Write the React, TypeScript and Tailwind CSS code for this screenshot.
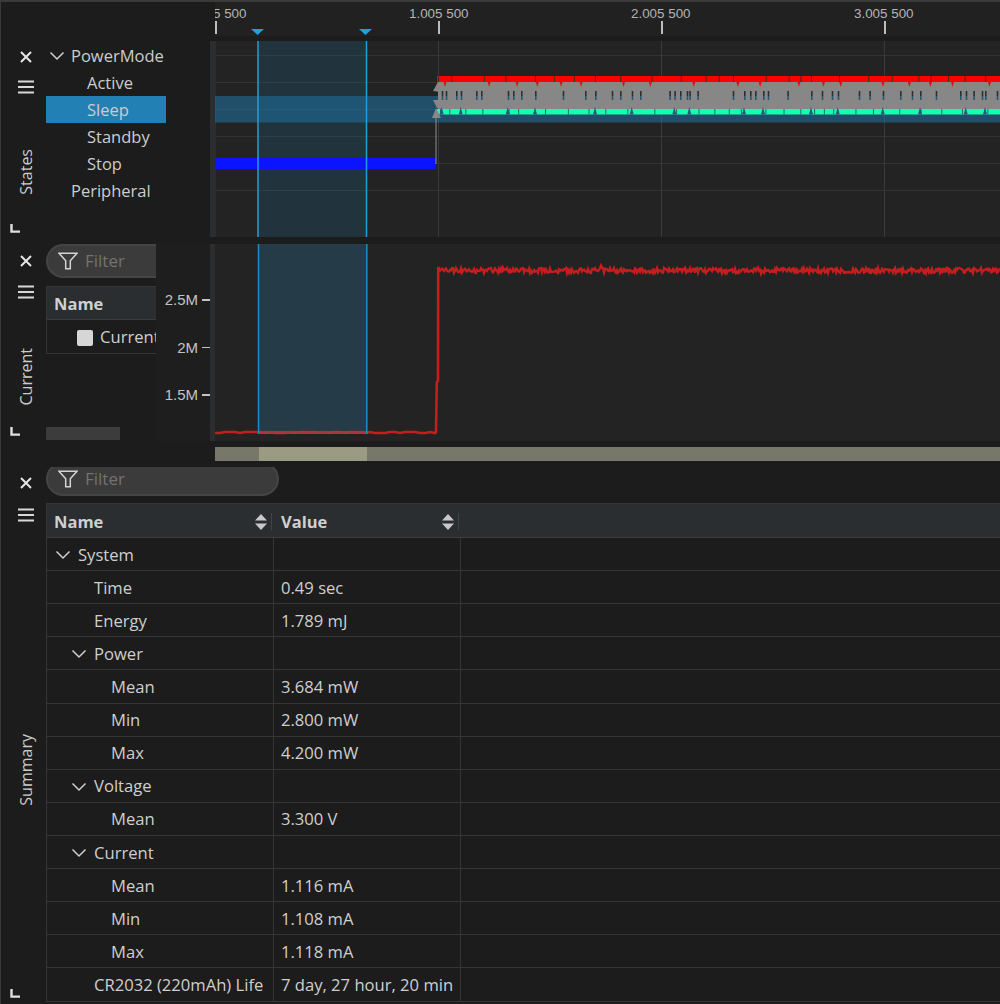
import React from "react";

const UI = { fontFamily: '"Open Sans", "Noto Sans", sans-serif' };
const AX = { fontFamily: '"Liberation Sans", Arial, sans-serif' };

const GAPS = [441.7, 445.7, 456, 460.7, 476, 481, 507.7, 513, 521, 535, 562.7, 585, 595, 611.7, 620, 631.7, 640, 669.3, 674.3, 680, 686.7, 689.3, 697.3, 732.7, 744, 750, 755, 763, 767.7, 787.3, 811, 821.7, 831.7, 837.7, 858.7, 869.3, 882.7, 900, 911.7, 920, 935.7, 960, 965.7, 973.3, 981.7, 985, 996.7];

function rnd(seed: number) {
  let s = seed;
  return () => {
    s = (s * 16807) % 2147483647;
    return (s % 10000) / 10000;
  };
}

function CloseIcon() {
  return (
    <svg width="12" height="12" viewBox="0 0 12 12" className="text-[#e6e6e6]">
      <path d="M1 1 L11 11 M11 1 L1 11" stroke="currentColor" strokeWidth="2" />
    </svg>
  );
}
function MenuIcon() {
  return (
    <svg width="16" height="14" viewBox="0 0 16 14" className="text-[#d8d8d8]">
      <path d="M0 1.5 H16 M0 7 H16 M0 12.5 H16" stroke="currentColor" strokeWidth="2" />
    </svg>
  );
}
function CornerIcon() {
  return (
    <svg width="10" height="9" viewBox="0 0 10 9" className="text-[#e0e0e0]">
      <path d="M1.5 0 V7.6 H10" fill="none" stroke="currentColor" strokeWidth="2.4" />
    </svg>
  );
}
function Chevron() {
  return (
    <svg width="16" height="10" viewBox="0 0 16 10" className="text-[#d0d0d0]">
      <path d="M1.5 1.5 L8 8 L14.5 1.5" fill="none" stroke="currentColor" strokeWidth="1.5" />
    </svg>
  );
}
function FilterIcon() {
  return (
    <svg width="20" height="18" viewBox="0 0 20 18" className="text-[#d4d4d4] shrink-0">
      <path d="M1 1.2 H19 L12.3 8.8 V16.8 H7.7 V8.8 Z" fill="none" stroke="currentColor" strokeWidth="1.5" />
    </svg>
  );
}
function SortIcon() {
  return (
    <svg width="12" height="16" viewBox="0 0 12 16" className="text-[#c8c8c8] shrink-0">
      <path d="M6 0 L12 6.5 H0 Z M0 9.5 H12 L6 16 Z" fill="currentColor" />
    </svg>
  );
}

function Gutter({ label, top, menuGap, labelClass, cornerClass }: { label: string; top: number; menuGap: number; labelClass: string; cornerClass: string }) {
  return (
    <div className="w-[46px] shrink-0 flex flex-col items-center relative pl-[6px]" style={{ paddingTop: top }}>
      <CloseIcon />
      <div style={{ marginTop: menuGap }} className="flex">
        <MenuIcon />
      </div>
      <div className={`[writing-mode:vertical-rl] rotate-180 text-[16px] leading-[20px] text-[#cccccc] ${labelClass}`}>{label}</div>
      <div className={`absolute left-[10px] flex ${cornerClass}`}>
        <CornerIcon />
      </div>
    </div>
  );
}

function FilterPill({ width }: { width: number }) {
  return (
    <div
      className="h-[34px] bg-[#3b3b3b] border-2 border-[#454545] rounded-[17px] flex items-center pl-[10px] gap-[7px] text-[17px] text-[#727272] shrink-0"
      style={{ width }}
    >
      <FilterIcon />
      <span>Filter</span>
    </div>
  );
}

function Row({ indent, name, value, open }: { indent: number; name: string; value?: string; open?: boolean }) {
  return (
    <div className="h-[33.12px] flex border-b border-[#363636] text-[16.6px] text-[#cfcfcf] shrink-0">
      <div className="w-[227px] shrink-0 border-r border-[#363636] flex items-center pt-[2px] whitespace-nowrap" style={{ paddingLeft: indent }}>
        {open && (
          <span className="mr-[7px] flex">
            <Chevron />
          </span>
        )}
        {name}
      </div>
      <div className="w-[187px] shrink-0 border-r border-[#363636] flex items-center pt-[2px] pl-[7px] whitespace-nowrap">{value}</div>
      <div className="flex-1" />
    </div>
  );
}

function AxisBar() {
  const ticks = [
    { x: 0, label: "5 500", left: -2 },
    { x: 223, label: "1.005 500", left: 194 },
    { x: 446, label: "2.005 500", left: 416 },
    { x: 669, label: "3.005 500", left: 639 },
  ];
  return (
    <div className="h-[36px] pl-[215px] shrink-0 border-t-2 border-[#3a3a3a]">
      <div className="relative h-full overflow-hidden bg-[#212121]" style={AX}>
        {ticks.map((t) => (
          <React.Fragment key={t.x}>
            <span className="absolute top-[3px] text-[13.4px] leading-[18px] text-[#b4b4b4] whitespace-nowrap" style={{ left: t.left }}>
              {t.label}
            </span>
            <div className="absolute top-[19px] h-[13px] w-[2px] bg-[#bdbdbd]" style={{ left: t.x }} />
          </React.Fragment>
        ))}
        <svg className="absolute left-[35px] top-[26px]" width="130" height="8" viewBox="0 0 130 8">
          <path d="M1 1 H14 L7.5 7 Z M109 1 H122 L115.5 7 Z" fill="#1f9fdc" />
        </svg>
      </div>
    </div>
  );
}

function StatesChart() {
  const r = rnd(12345);
  const redGaps: number[] = [];
  for (let x = 438; x < 1000; x += 7 + r() * 26) redGaps.push(x);
  const redSpikes: number[] = [];
  for (let x = 445; x < 1000; x += 16 + r() * 36) redSpikes.push(x);
  const greenGaps: number[] = [];
  for (let x = 440; x < 1000; x += 8 + r() * 20) greenGaps.push(x);
  return (
    <svg width="790" height="196" viewBox="210 41 790 196" className="block">
      <rect x="210" y="41" width="790" height="196" fill="#232323" />
      <rect x="210" y="41" width="6" height="196" fill="#2b2d2e" />
      {[55.5, 82.5, 109.5, 136.5, 163.5, 190.5].map((y) => (
        <line key={y} x1="216" x2="1000" y1={y} y2={y} stroke="#333333" />
      ))}
      {[438.5, 661.5, 884.5].map((x) => (
        <line key={x} x1={x} x2={x} y1="41" y2="237" stroke="#383b3d" />
      ))}
      <rect x="215" y="96" width="785" height="26.5" fill="#1f7bb0" fillOpacity="0.5" />
      <rect x="258" y="41" width="109" height="196" fill="#1d6d99" fillOpacity="0.22" />
      <rect x="215" y="158" width="221" height="11" fill="#0a14ff" />

      <rect x="437" y="76" width="563" height="6.5" fill="#ff0000" />
      {redGaps.map((x) => (
        <rect key={x} x={x} y="76" width="1" height="6" fill="#4a2424" />
      ))}
      <rect x="437" y="109" width="563" height="5.5" fill="#14ffb0" />
      {greenGaps.map((x) => (
        <rect key={x} x={x} y="109" width="1" height="5.5" fill="#1f6a78" />
      ))}
      <rect x="438" y="82" width="562" height="27" fill="#878787" />
      {redSpikes.map((x) => (
        <path key={x} d={`M${x - 1.5} 82 L${x + 1.5} 82 L${x} 87 Z`} fill="#e01010" />
      ))}
      {GAPS.map((x) => (
        <g key={x}>
          <rect x={x} y="91" width="1.6" height="5" fill="#2b2f34" />
          <rect x={x} y="96" width="1.6" height="4" fill="#2a5672" />
        </g>
      ))}
      {GAPS.filter((_, i) => i % 3 === 0).map((x) => (
        <path key={x} d={`M${x - 2} 114.5 L${x + 2} 114.5 L${x} 107 Z`} fill="#245a78" />
      ))}
      <path d="M433 91 L438 82 L441 82 L441 92 Z M433 100 L441 100 L441 108 L437 108 Z M432 118 L436 108 L441 118 Z" fill="#878787" />
      <rect x="435.5" y="116" width="1" height="48" fill="#8e8e8e" />
      <line x1="258" x2="258" y1="41" y2="237" stroke="#1f9fdc" strokeWidth="1.5" />
      <line x1="366.5" x2="366.5" y1="41" y2="237" stroke="#1f9fdc" strokeWidth="1.5" />
    </svg>
  );
}

function CurrentChart() {
  const r = rnd(777);
  let low = "M215 432";
  for (let x = 215; x <= 436; x += 5) low += ` L${x} ${432 + (r() > 0.6 ? 1 : 0)}`;
  low += " L436 432 L436.8 382 L438 381 L438.2 267";
  let high = "M438 267";
  for (let x = 439; x <= 1000; x += 1) {
    const big = Math.abs(x - 601) < 2 || Math.abs(x - 760) < 3;
    const v = 270.5 + (r() - 0.5) * (big ? 11 : 5);
    high += ` L${x} ${v.toFixed(1)}`;
  }
  return (
    <svg width="785" height="197" viewBox="215 244 785 197" className="block">
      <rect x="215" y="244" width="785" height="197" fill="#232323" />
      <rect x="258" y="244" width="109" height="190" fill="#253b48" />
      <path d={low} fill="none" stroke="#c41e1e" strokeWidth="2.6" />
      <path d={high} fill="none" stroke="#c41e1e" strokeWidth="2.4" />
      <rect x="258" y="431" width="109" height="3" fill="#a83a48" fillOpacity="0.85" />
      <line x1="258.5" x2="258.5" y1="244" y2="434" stroke="#1f8ec8" strokeWidth="1.5" />
      <line x1="366.8" x2="366.8" y1="244" y2="434" stroke="#1f8ec8" strokeWidth="1.5" />
    </svg>
  );
}

function AxisLabel({ label, mt }: { label: string; mt: number }) {
  return (
    <div className="flex items-center justify-end h-[16px] gap-[4px]" style={{ marginTop: mt }}>
      <span className="text-[15px] leading-[16px] text-[#c4c4c4]" style={AX}>
        {label}
      </span>
      <div className="w-[8px] h-[1.5px] bg-[#c4c4c4]" />
    </div>
  );
}

const rows = [
  { indent: 8, name: "System", open: true },
  { indent: 47, name: "Time", value: "0.49 sec" },
  { indent: 47, name: "Energy", value: "1.789 mJ" },
  { indent: 24, name: "Power", open: true },
  { indent: 64, name: "Mean", value: "3.684 mW" },
  { indent: 64, name: "Min", value: "2.800 mW" },
  { indent: 64, name: "Max", value: "4.200 mW" },
  { indent: 24, name: "Voltage", open: true },
  { indent: 64, name: "Mean", value: "3.300 V" },
  { indent: 24, name: "Current", open: true },
  { indent: 64, name: "Mean", value: "1.116 mA" },
  { indent: 64, name: "Min", value: "1.108 mA" },
  { indent: 64, name: "Max", value: "1.118 mA" },
  { indent: 47, name: "CR2032 (220mAh) Life", value: "7 day, 27 hour, 20 min" },
];

export default function App() {
  const tree = [
    { name: "PowerMode", indent: 25, open: true },
    { name: "Active", indent: 41 },
    { name: "Sleep", indent: 41, selected: true },
    { name: "Standby", indent: 41 },
    { name: "Stop", indent: 41 },
    { name: "Peripheral", indent: 25 },
  ];
  return (
    <div className="w-[1000px] h-[1004px] bg-[#1c1c1c] flex flex-col overflow-hidden shadow-[inset_1px_0_0_#3a3a3a]" style={UI}>
      <AxisBar />
      <div className="h-[5px] shrink-0" />

      {/* States */}
      <div className="h-[196px] flex shrink-0">
        <Gutter label="States" top={10} menuGap={17} labelClass="mt-[55px]" cornerClass="bottom-[4px]" />
        <div className="w-[164px] shrink-0 pt-[1px]">
          {tree.map((t) => (
            <div
              key={t.name}
              className={`h-[27px] w-[119.5px] flex items-center pt-[2px] whitespace-nowrap text-[16.5px] text-[#cdcdcd] relative ${t.selected ? "bg-[#2380b5]" : ""}`}
              style={{ paddingLeft: t.indent }}
            >
              {t.open && (
                <span className="absolute left-[3px] top-[9px] flex">
                  <Chevron />
                </span>
              )}
              {t.name}
            </div>
          ))}
        </div>
        <StatesChart />
      </div>
      <div className="h-[7px] shrink-0" />

      {/* Current */}
      <div className="h-[197px] flex shrink-0">
        <Gutter label="Current" top={11} menuGap={18} labelClass="mt-[49px]" cornerClass="bottom-[5px]" />
        <div className="w-[110px] shrink-0 overflow-hidden flex flex-col">
          <div className="w-[233px]">
            <FilterPill width={233} />
            <div className="mt-[8px] border border-[#363636]">
              <div className="h-[33px] bg-[#2a2e30] border-b border-[#3c3c3c] flex items-center pl-[7px] pt-[2px] text-[16.5px] font-bold text-[#d0d0d0]">Name</div>
              <div className="h-[33px] flex items-center pl-[30px] gap-[7px] pt-[2px] text-[16.6px] text-[#cfcfcf]">
                <div className="w-[16px] h-[16px] rounded-[2px] bg-[#d6d6d6]" />
                Current
              </div>
            </div>
          </div>
          <div className="mt-auto mb-[1px] h-[13px] w-[74px] bg-[#3c3c3c]" />
        </div>
        <div className="w-[59px] shrink-0 bg-[#1e1e1e] flex">
          <div className="w-[54px] pt-[48px]">
            <AxisLabel label="2.5M" mt={0} />
            <AxisLabel label="2M" mt={31.5} />
            <AxisLabel label="1.5M" mt={31.5} />
          </div>
          <div className="w-[5px] bg-[#2b2d2e]" />
        </div>
        <CurrentChart />
      </div>

      {/* Scrollbar */}
      <div className="mt-[6px] h-[14px] ml-[215px] bg-[#77776a] shrink-0 flex">
        <div className="ml-[43.5px] w-[108.5px] bg-[#9b9a82]" />
      </div>

      {/* Summary */}
      <div className="flex flex-1 mt-[4px] min-h-0">
        <Gutter label="Summary" top={12} menuGap={19} labelClass="mt-[212px]" cornerClass="bottom-[6px]" />
        <div className="flex-1 flex flex-col min-w-0">
          <div className="mt-[2px] h-[29px] overflow-hidden shrink-0">
            <div className="-mt-[5px]">
              <FilterPill width={233} />
            </div>
          </div>
          <div className="mt-[7px] border-l border-t border-[#363636] flex flex-col">
            <div className="h-[34px] bg-[#2a2e30] border-b border-[#3c3c3c] flex items-center text-[16.5px] font-bold text-[#d0d0d0] shrink-0">
              <div className="w-[227px] flex items-center pl-[7px] pr-[2px] pt-[2px] shrink-0">
                <span className="flex-1 mt-[2px]">Name</span>
                <SortIcon />
                <div className="w-[1px] h-[17px] bg-[#3f4446] ml-[4px]" />
              </div>
              <div className="w-[187px] flex items-center pl-[7px] pr-[2px] pt-[2px] shrink-0">
                <span className="flex-1 mt-[2px]">Value</span>
                <SortIcon />
                <div className="w-[1px] h-[17px] bg-[#3f4446] ml-[4px]" />
              </div>
            </div>
            {rows.map((r, i) => (
              <Row key={i} {...r} />
            ))}
          </div>
        </div>
      </div>
    </div>
  );
}
